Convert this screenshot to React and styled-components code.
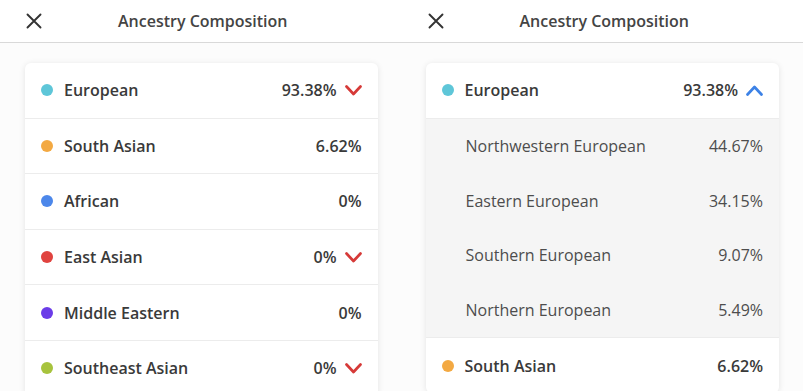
import React from "react";
import styled, { createGlobalStyle } from "styled-components";

const GlobalStyle = createGlobalStyle`
  body {
    margin: 0;
    background: #fcfcfc;
    font-family: "Open Sans", "Liberation Sans", sans-serif;
    color: #3a3a3a;
  }
`;

const Page = styled.div`
  display: flex;
  width: 803px;
  height: 391px;
  overflow: hidden;
`;

const Panel = styled.div`
  flex: 1;
  display: flex;
  flex-direction: column;
`;

const Header = styled.div`
  position: relative;
  flex-shrink: 0;
  height: 42px;
  border-bottom: 1px solid #d9d9d9;
  background: #fff;
  display: flex;
  align-items: center;
  justify-content: center;
`;

const CloseBtn = styled.button`
  position: absolute;
  left: 26px;
  top: 13px;
  border: 0;
  padding: 0;
  background: none;
  width: 16px;
  height: 16px;
  display: flex;
`;

const Title = styled.h1`
  margin: 0 0 0 4px;
  font-size: 16px;
  font-weight: 600;
  color: #444;
`;

const Body = styled.div`
  flex-shrink: 0;
  padding: 20px 24px 0 ${(p) => p.$left}px;
`;

const Card = styled.div`
  background: #fff;
  border-radius: 6px;
  box-shadow: 0 1px 6px rgba(0, 0, 0, 0.1);
  overflow: hidden;
`;

const Row = styled.div`
  height: 54.6px;
  display: flex;
  align-items: center;
  padding: 0 16px;
  border-top: ${(p) => (p.$first ? "0" : "1px solid #ececec")};
`;

const Dot = styled.span`
  width: 12px;
  height: 12px;
  border-radius: 50%;
  background: ${(p) => p.$color};
  margin-right: 11px;
  flex-shrink: 0;
`;

const Label = styled.span`
  flex: 1;
  font-size: 16px;
  font-weight: 600;
  color: #3a3a3a;
`;

const Percent = styled.span`
  font-size: 16px;
  font-weight: 600;
  color: #3a3a3a;
`;

const Chevron = styled.svg`
  width: 17px;
  height: 11px;
  margin-left: 8px;
`;

const SubList = styled.div`
  background: #f5f5f5;
  border-top: 1px solid #ececec;
`;

const SubRow = styled.div`
  height: 54.7px;
  display: flex;
  align-items: center;
  padding: 0 16px 0 40px;
`;

const SubLabel = styled.span`
  flex: 1;
  font-size: 16px;
  color: #4d4d4d;
`;

const SubPercent = styled.span`
  font-size: 16px;
  color: #4d4d4d;
`;

function CloseIcon() {
  return (
    <svg width="16" height="16" viewBox="0 0 16 16">
      <path d="M1.5 1.5L14.5 14.5M14.5 1.5L1.5 14.5" stroke="#333" strokeWidth="1.9" strokeLinecap="round" />
    </svg>
  );
}

function Arrow({ up }) {
  return (
    <Chevron viewBox="0 0 17 11">
      <polyline
        points={up ? "1.5,9.5 8.5,2 15.5,9.5" : "1.5,1.5 8.5,9 15.5,1.5"}
        fill="none"
        stroke={up ? "#3d82e6" : "#d63a38"}
        strokeWidth="2.7"
        strokeLinecap="round"
        strokeLinejoin="round"
      />
    </Chevron>
  );
}

const regions = [
  { name: "European", pct: "93.38%", color: "#5ec6d8", arrow: true },
  { name: "South Asian", pct: "6.62%", color: "#f3a942" },
  { name: "African", pct: "0%", color: "#4c87ea" },
  { name: "East Asian", pct: "0%", color: "#e0433f", arrow: true },
  { name: "Middle Eastern", pct: "0%", color: "#6b3ce8" },
  { name: "Southeast Asian", pct: "0%", color: "#a7c33d", arrow: true },
];

const european = [
  { name: "Northwestern European", pct: "44.67%" },
  { name: "Eastern European", pct: "34.15%" },
  { name: "Southern European", pct: "9.07%" },
  { name: "Northern European", pct: "5.49%" },
];

function PanelHeader() {
  return (
    <Header>
      <CloseBtn>
        <CloseIcon />
      </CloseBtn>
      <Title>Ancestry Composition</Title>
    </Header>
  );
}

export default function App() {
  return (
    <>
      <GlobalStyle />
      <Page>
        <Panel>
          <PanelHeader />
          <Body $left={25}>
            <Card>
              {regions.map((r, i) => (
                <Row key={r.name} $first={i === 0}>
                  <Dot $color={r.color} />
                  <Label>{r.name}</Label>
                  <Percent>{r.pct}</Percent>
                  {r.arrow && <Arrow />}
                </Row>
              ))}
            </Card>
          </Body>
        </Panel>
        <Panel>
          <PanelHeader />
          <Body $left={24}>
            <Card>
              <Row $first>
                <Dot $color={regions[0].color} />
                <Label>European</Label>
                <Percent>93.38%</Percent>
                <Arrow up />
              </Row>
              <SubList>
                {european.map((s) => (
                  <SubRow key={s.name}>
                    <SubLabel>{s.name}</SubLabel>
                    <SubPercent>{s.pct}</SubPercent>
                  </SubRow>
                ))}
              </SubList>
              <Row>
                <Dot $color={regions[1].color} />
                <Label>South Asian</Label>
                <Percent>6.62%</Percent>
              </Row>
            </Card>
          </Body>
        </Panel>
      </Page>
    </>
  );
}
